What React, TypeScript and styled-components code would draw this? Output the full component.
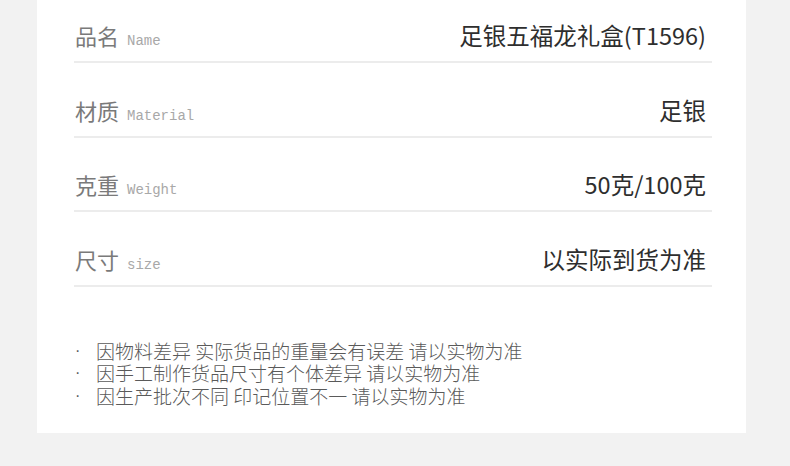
import React from "react";
import styled, { createGlobalStyle } from "styled-components";

const Global = createGlobalStyle`
  html, body { margin: 0; padding: 0; background: #f2f2f2; }
  body { font-family: "Noto Sans CJK SC", "Noto Sans", sans-serif; }
`;

const Page = styled.div`
  width: 790px;
  height: 466px;
  background: #f2f2f2;
  display: flex;
  padding-left: 37px;
  box-sizing: border-box;
`;

const Card = styled.div`
  width: 709px;
  height: 433px;
  background: #ffffff;
  box-sizing: border-box;
  padding: 20px 34px 0 37px;
  display: flex;
  flex-direction: column;
`;

const Rows = styled.div`
  display: flex;
  flex-direction: column;
  gap: 31.5px;
`;

const Row = styled.div`
  display: flex;
  align-items: baseline;
  justify-content: space-between;
  height: 30px;
  padding: 0 6px 11px 1px;
  border-bottom: 2px solid #ececec;
`;

const Label = styled.div`
  display: flex;
  align-items: baseline;
  gap: 8px;
  line-height: 30px;
`;

const LabelCn = styled.span`
  font-size: 22px;
  color: #7a7a7a;
`;

const LabelEn = styled.span`
  font-family: "Liberation Mono", "DejaVu Sans Mono", monospace;
  font-size: 14px;
  color: #a8a8a8;
`;

const Value = styled.span`
  font-size: 23.5px;
  line-height: 30px;
  color: #2e2e2e;
`;

const Notes = styled.ul`
  list-style: none;
  margin: 53px 0 0 0;
  padding: 0;
  display: flex;
  flex-direction: column;
`;

const Note = styled.li`
  display: flex;
  font-size: 19px;
  font-weight: 300;
  line-height: 22.5px;
  color: #5a5a5a;
`;

const Bullet = styled.span`
  width: 22px;
  padding-left: 1px;
  box-sizing: border-box;
  font-family: "Liberation Sans", sans-serif;
  font-size: 16px;
`;

const rows = [
  { cn: "品名", en: "Name", value: "足银五福龙礼盒(T1596)" },
  { cn: "材质", en: "Material", value: "足银" },
  { cn: "克重", en: "Weight", value: "50克/100克" },
  { cn: "尺寸", en: "size", value: "以实际到货为准" },
];

const notes = [
  "因物料差异 实际货品的重量会有误差 请以实物为准",
  "因手工制作货品尺寸有个体差异 请以实物为准",
  "因生产批次不同 印记位置不一 请以实物为准",
];

export default function App() {
  return (
    <>
      <Global />
      <Page>
        <Card>
          <Rows>
            {rows.map((r) => (
              <Row key={r.cn}>
                <Label>
                  <LabelCn>{r.cn}</LabelCn>
                  <LabelEn>{r.en}</LabelEn>
                </Label>
                <Value>{r.value}</Value>
              </Row>
            ))}
          </Rows>
          <Notes>
            {notes.map((n) => (
              <Note key={n}>
                <Bullet>·</Bullet>
                <span>{n}</span>
              </Note>
            ))}
          </Notes>
        </Card>
      </Page>
    </>
  );
}
